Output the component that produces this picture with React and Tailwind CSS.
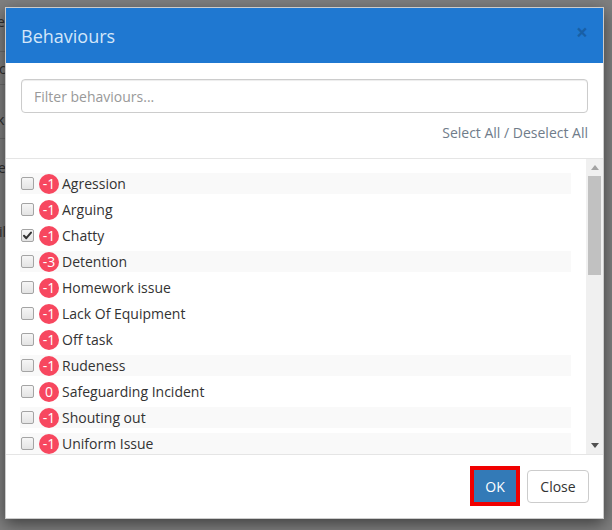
import React from "react";

const items = [
  { n: "-1", label: "Agression", stripe: true },
  { n: "-1", label: "Arguing" },
  { n: "-1", label: "Chatty", checked: true },
  { n: "-3", label: "Detention", stripe: true },
  { n: "-1", label: "Homework issue" },
  { n: "-1", label: "Lack Of Equipment" },
  { n: "-1", label: "Off task" },
  { n: "-1", label: "Rudeness", stripe: true },
  { n: "0", label: "Safeguarding Incident" },
  { n: "-1", label: "Shouting out", stripe: true },
  { n: "-1", label: "Uniform Issue", stripe: true },
];

function Checkbox({ checked }) {
  return (
    <div className="relative w-[13px] h-[13px] shrink-0 rounded-[2px] border border-[#a4a4a4] bg-gradient-to-b from-[#f6f6f6] to-[#e4e4e4]">
      {checked && (
        <svg viewBox="0 0 13 13" className="absolute left-[-1px] top-[-1px] w-[13px] h-[13px]">
          <path d="M3 6.8 L5.3 9.2 L10 3.6" fill="none" stroke="#333" strokeWidth="2" strokeLinecap="round" strokeLinejoin="round" />
        </svg>
      )}
    </div>
  );
}

function Row({ n, label, stripe, checked }) {
  return (
    <div className={`flex items-center h-[21px] mb-[5px] ${stripe ? "bg-[#f9f9f9]" : ""}`}>
      <div className="ml-[1px]">
        <Checkbox checked={checked} />
      </div>
      <div className="ml-[5px] w-[20px] h-[20px] rounded-full bg-[#f7475f] text-white text-[14px] leading-[20px] text-center shrink-0">
        {n}
      </div>
      <div className="ml-[3px] text-[14px] text-[#333] leading-[20px] whitespace-nowrap">{label}</div>
    </div>
  );
}

export default function App() {
  return (
    <div className="relative w-[612px] h-[530px] bg-[#7f7f7f] overflow-hidden font-['Open_Sans',sans-serif]">
      {/* page behind the overlay */}
      <div className="w-[5px] overflow-hidden text-[14px] text-[#2e2e2e]">
        <div className="h-[52px] border-b border-[#6c6c6c] pt-[11px] ml-[-3px]">e</div>
        <div className="h-[33px] border-b border-[#6c6c6c] pt-[6px] ml-[-1px]">c</div>
        <div className="h-[54px] border-b border-[#6c6c6c] pt-[24px] ml-[-3px]">k</div>
        <div className="h-[60px] pt-[18px] ml-[-2px]">e</div>
        <div className="h-[60px] pt-[22px] ml-[-1px]">il</div>
      </div>

      {/* modal */}
      <div className="absolute left-[5px] top-[7px] w-[599px] h-[512px] bg-white border border-[rgba(0,0,0,0.2)] shadow-[0_5px_15px_rgba(0,0,0,0.5)] flex flex-col">
        <div className="h-[55px] bg-[#1f78d1] flex items-center justify-between pl-[15px] pr-[15px] shrink-0">
          <div className="text-[18px] text-[#d3e6f9] leading-[26px] mt-[1px]">Behaviours</div>
          <div className="text-[21px] font-bold leading-none text-black opacity-20 mt-[-6px]">×</div>
        </div>

        <div className="px-[15px] pt-[16px] pb-[15px] border-b border-[#e5e5e5] shrink-0">
          <div className="h-[34px] border border-[#ccc] rounded-[4px] flex items-center px-[12px] text-[14px] text-[#999] shadow-[inset_0_1px_1px_rgba(0,0,0,0.075)]">
            Filter behaviours...
          </div>
          <div className="mt-[10px] text-right text-[14px] leading-[20px] text-[#6f7c8a]">
            Select All / Deselect All
          </div>
        </div>

        <div className="flex flex-1 min-h-0">
          <div className="flex-1 overflow-hidden pl-[14px] pr-[15px] pt-[14px]">
            {items.map((it) => (
              <Row key={it.label} {...it} />
            ))}
          </div>
          <div className="w-[17px] bg-[#f0f0f0] flex flex-col items-center shrink-0">
            <div className="h-[17px] flex items-center justify-center">
              <svg width="8" height="5" viewBox="0 0 8 5"><path d="M0 5 L4 0 L8 5 Z" fill="#a3a3a3" /></svg>
            </div>
            <div className="w-[13px] h-[99px] bg-[#c1c1c1]" />
            <div className="flex-1" />
            <div className="h-[17px] flex items-center justify-center">
              <svg width="8" height="5" viewBox="0 0 8 5"><path d="M0 0 L8 0 L4 5 Z" fill="#505050" /></svg>
            </div>
          </div>
        </div>

        <div className="h-[64px] border-t border-[#e5e5e5] flex items-center justify-end pr-[14px] gap-[7px] shrink-0">
          <div className="border-[4px] border-[#f00000] mt-[-1px]">
            <div className="w-[42px] h-[32px] bg-[#337ab7] text-white text-[14px] flex items-center justify-center">OK</div>
          </div>
          <div className="w-[62px] h-[33px] border border-[#ccc] rounded-[4px] bg-white text-[#333] text-[14px] flex items-center justify-center">
            Close
          </div>
        </div>
      </div>
    </div>
  );
}
